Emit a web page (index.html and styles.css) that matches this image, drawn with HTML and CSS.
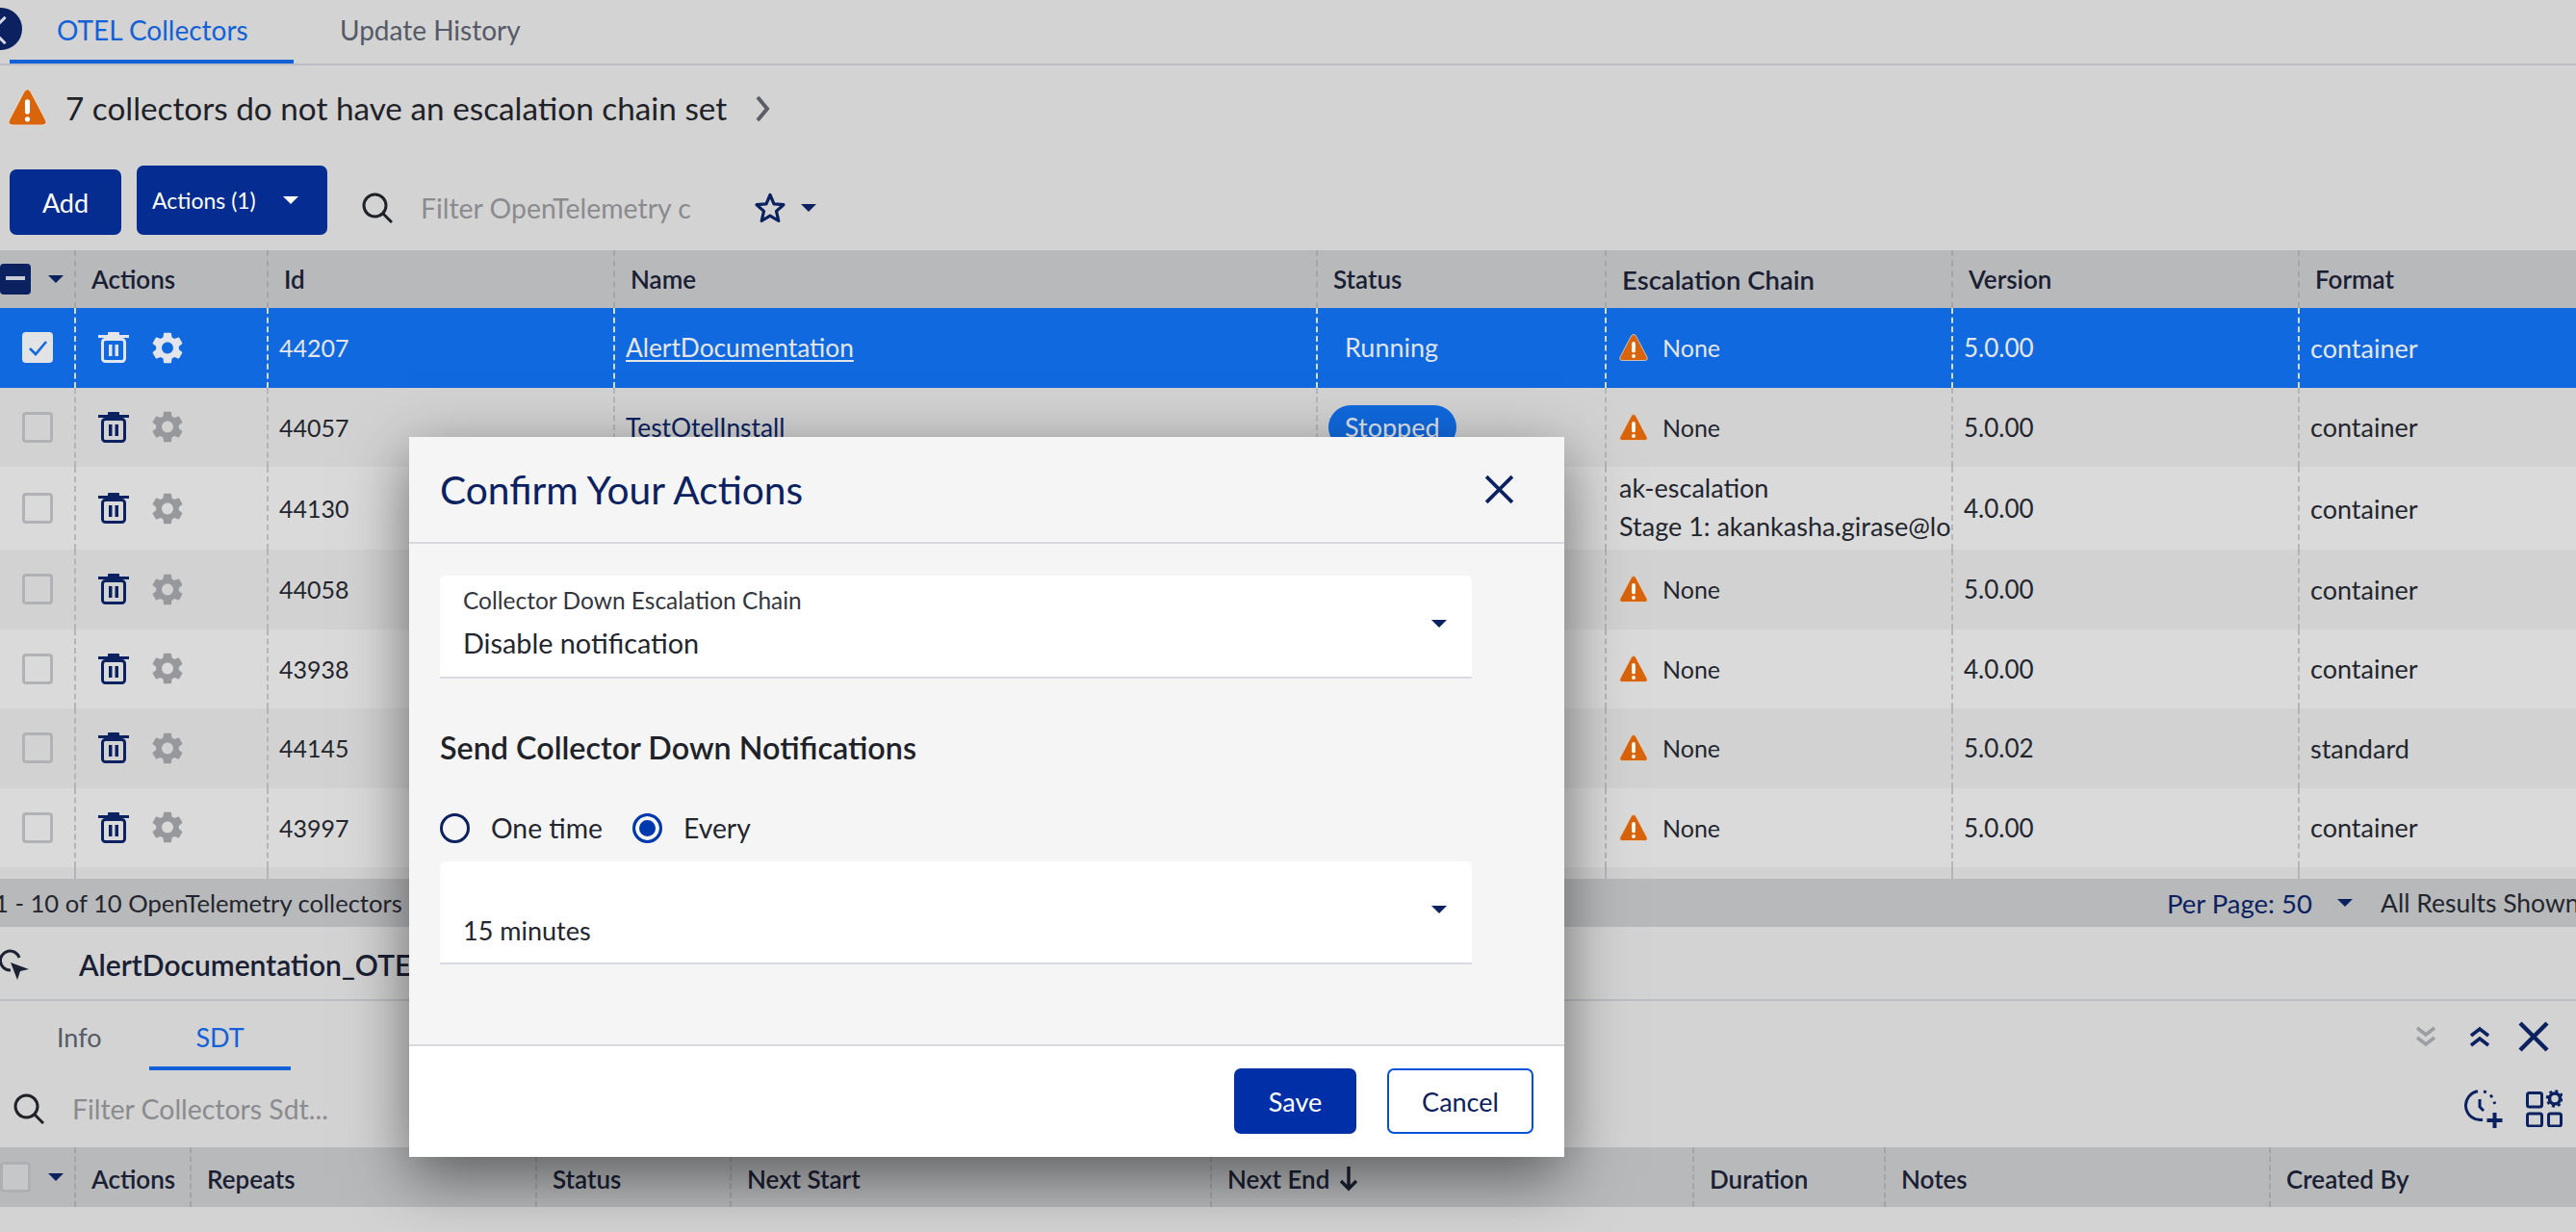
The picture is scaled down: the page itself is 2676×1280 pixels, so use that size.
FILE: index.html
```html
<!DOCTYPE html>
<html lang="en">
<head>
    <meta charset="UTF-8">
    <title>OTEL Collectors</title>
    <link rel="stylesheet" href="styles.css">
</head>
<body>
    <svg class="defs" width="0" height="0">
        <symbol id="warn" viewBox="0 0 40 40">
            <path d="M17 3.5 Q20 0 23 3.5 L38.5 33 Q40.5 38 35 38 H5 Q-0.5 38 1.5 33 Z" fill="#d9640a" stroke="#e6dcd2" stroke-width="1" stroke-linejoin="round"/>
            <rect x="17.5" y="12" width="5" height="15" rx="2.5" fill="#fff"/>
            <circle cx="20" cy="32" r="2.6" fill="#fff"/>
        </symbol>
        <symbol id="trash" viewBox="0 0 32 32">
            <rect x="0" y="3" width="32" height="3" fill="currentColor"/>
            <rect x="10" y="0" width="12" height="4" rx="1" fill="currentColor"/>
            <rect x="4.5" y="7.5" width="23" height="23" rx="3" fill="none" stroke="currentColor" stroke-width="3"/>
            <rect x="11" y="13" width="3.5" height="12" fill="currentColor"/>
            <rect x="17.5" y="13" width="3.5" height="12" fill="currentColor"/>
        </symbol>
        <symbol id="gear" viewBox="2.4 2 19.2 20">
            <path fill="currentColor" d="M19.14 12.94c.04-.3.06-.61.06-.94 0-.32-.02-.64-.07-.94l2.03-1.58c.18-.14.23-.41.12-.61l-1.92-3.32c-.12-.22-.37-.29-.59-.22l-2.39.96c-.5-.38-1.03-.7-1.62-.94l-.36-2.54c-.04-.24-.24-.41-.48-.41h-3.84c-.24 0-.43.17-.47.41l-.36 2.54c-.59.24-1.13.57-1.62.94l-2.39-.96c-.22-.08-.47 0-.59.22L2.74 8.87c-.12.21-.08.47.12.61l2.03 1.58c-.05.3-.09.63-.09.94s.02.64.07.94l-2.03 1.58c-.18.14-.23.41-.12.61l1.92 3.32c.12.22.37.29.59.22l2.39-.96c.5.38 1.03.7 1.62.94l.36 2.54c.05.24.24.41.48.41h3.84c.24 0 .44-.17.47-.41l.36-2.54c.59-.24 1.13-.56 1.62-.94l2.39.96c.22.08.47 0 .59-.22l1.92-3.32c.12-.22.07-.47-.12-.61l-2.01-1.58zM12 15.6c-1.98 0-3.6-1.62-3.6-3.6s1.62-3.6 3.6-3.6 3.6 1.62 3.6 3.6-1.62 3.6-3.6 3.6z"/>
        </symbol>
        <symbol id="search" viewBox="0 0 32 32">
            <circle cx="13.5" cy="13.5" r="11.5" fill="none" stroke="currentColor" stroke-width="3"/>
            <path d="M22 22 L31 31" stroke="currentColor" stroke-width="3" fill="none"/>
        </symbol>
    </svg>

    <div class="tabs">
        <span class="back-btn"></span>
        <div class="tab tab-active tab-otel">OTEL Collectors</div>
        <div class="tab tab-history">Update History</div>
    </div>

    <div class="notice">
        <svg class="icon-warn-lg"><use href="#warn"/></svg>
        <span class="notice-text">7 collectors do not have an escalation chain set</span>
        <svg class="notice-arrow" viewBox="0 0 18 28"><path d="M4 2 L14 14 L4 26" fill="none" stroke="#5b5e66" stroke-width="4"/></svg>
    </div>

    <div class="toolbar">
        <button class="btn-add">Add</button>
        <button class="btn-actions">Actions (1)<span class="caret caret-white"></span></button>
        <svg class="icon-search"><use href="#search"/></svg>
        <span class="placeholder filter-main">Filter OpenTelemetry c</span>
        <svg class="icon-star" viewBox="0 0 32 32"><path d="M16 2.5 L20 11.8 L30 12.7 L22.5 19.4 L24.8 29.5 L16 24.2 L7.2 29.5 L9.5 19.4 L2 12.7 L12 11.8 Z" fill="none" stroke="#0b2160" stroke-width="3.2" stroke-linejoin="round"/></svg>
        <span class="caret"></span>
    </div>

    <div class="table">
        <div class="row row-head">
            <div class="cell c-check"><span class="check check-minus"></span><span class="caret"></span></div>
            <div class="cell c-actions">Actions</div>
            <div class="cell c-id">Id</div>
            <div class="cell c-name">Name</div>
            <div class="cell c-status">Status</div>
            <div class="cell c-chain">Escalation Chain</div>
            <div class="cell c-version">Version</div>
            <div class="cell c-format">Format</div>
        </div>

        <div class="row row-selected">
            <div class="cell c-check"><span class="check check-on"><svg viewBox="0 0 24 24"><path d="M4 13 L10 19 L21 6" fill="none" stroke="#1069de" stroke-width="2.6"/></svg></span></div>
            <div class="cell c-actions"><svg class="icon-trash"><use href="#trash"/></svg><svg class="icon-gear"><use href="#gear"/></svg></div>
            <div class="cell c-id">44207</div>
            <div class="cell c-name"><a class="name-link">AlertDocumentation</a></div>
            <div class="cell c-status"><span class="pill">Running</span></div>
            <div class="cell c-chain"><svg class="icon-warn"><use href="#warn"/></svg>None</div>
            <div class="cell c-version">5.0.00</div>
            <div class="cell c-format">container</div>
        </div>
        <div class="row row-even">
            <div class="cell c-check"><span class="check"></span></div>
            <div class="cell c-actions"><svg class="icon-trash"><use href="#trash"/></svg><svg class="icon-gear"><use href="#gear"/></svg></div>
            <div class="cell c-id">44057</div>
            <div class="cell c-name"><a class="name-link">TestOtelInstall</a></div>
            <div class="cell c-status"><span class="pill">Stopped</span></div>
            <div class="cell c-chain"><svg class="icon-warn"><use href="#warn"/></svg>None</div>
            <div class="cell c-version">5.0.00</div>
            <div class="cell c-format">container</div>
        </div>
        <div class="row row-odd row-tall">
            <div class="cell c-check"><span class="check"></span></div>
            <div class="cell c-actions"><svg class="icon-trash"><use href="#trash"/></svg><svg class="icon-gear"><use href="#gear"/></svg></div>
            <div class="cell c-id">44130</div>
            <div class="cell c-name"></div>
            <div class="cell c-status"></div>
            <div class="cell c-chain c-chain-text"><div>ak-escalation</div><div>Stage 1: akankasha.girase@lo</div></div>
            <div class="cell c-version">4.0.00</div>
            <div class="cell c-format">container</div>
        </div>
        <div class="row row-even">
            <div class="cell c-check"><span class="check"></span></div>
            <div class="cell c-actions"><svg class="icon-trash"><use href="#trash"/></svg><svg class="icon-gear"><use href="#gear"/></svg></div>
            <div class="cell c-id">44058</div>
            <div class="cell c-name"></div>
            <div class="cell c-status"></div>
            <div class="cell c-chain"><svg class="icon-warn"><use href="#warn"/></svg>None</div>
            <div class="cell c-version">5.0.00</div>
            <div class="cell c-format">container</div>
        </div>
        <div class="row row-odd">
            <div class="cell c-check"><span class="check"></span></div>
            <div class="cell c-actions"><svg class="icon-trash"><use href="#trash"/></svg><svg class="icon-gear"><use href="#gear"/></svg></div>
            <div class="cell c-id">43938</div>
            <div class="cell c-name"></div>
            <div class="cell c-status"></div>
            <div class="cell c-chain"><svg class="icon-warn"><use href="#warn"/></svg>None</div>
            <div class="cell c-version">4.0.00</div>
            <div class="cell c-format">container</div>
        </div>
        <div class="row row-even">
            <div class="cell c-check"><span class="check"></span></div>
            <div class="cell c-actions"><svg class="icon-trash"><use href="#trash"/></svg><svg class="icon-gear"><use href="#gear"/></svg></div>
            <div class="cell c-id">44145</div>
            <div class="cell c-name"></div>
            <div class="cell c-status"></div>
            <div class="cell c-chain"><svg class="icon-warn"><use href="#warn"/></svg>None</div>
            <div class="cell c-version">5.0.02</div>
            <div class="cell c-format">standard</div>
        </div>
        <div class="row row-odd">
            <div class="cell c-check"><span class="check"></span></div>
            <div class="cell c-actions"><svg class="icon-trash"><use href="#trash"/></svg><svg class="icon-gear"><use href="#gear"/></svg></div>
            <div class="cell c-id">43997</div>
            <div class="cell c-name"></div>
            <div class="cell c-status"></div>
            <div class="cell c-chain"><svg class="icon-warn"><use href="#warn"/></svg>None</div>
            <div class="cell c-version">5.0.00</div>
            <div class="cell c-format">container</div>
        </div>
        <div class="row row-even row-cut">
            <div class="cell c-check"></div>
            <div class="cell c-actions"></div>
            <div class="cell c-id"></div>
            <div class="cell c-name"></div>
            <div class="cell c-status"></div>
            <div class="cell c-chain"></div>
            <div class="cell c-version"></div>
            <div class="cell c-format"></div>
        </div>
    </div>

    <div class="table-footer">
        <span class="results">1 - 10 of 10 OpenTelemetry collectors</span>
        <span class="per-page">Per Page: 50</span>
        <span class="caret"></span>
        <span class="all-results">All Results Shown</span>
    </div>

    <div class="detail-title">
        <svg class="icon-pointer" viewBox="0 0 30 32">
            <path d="M11 22 A10 10 0 1 1 20 9" fill="none" stroke="#1c2233" stroke-width="3"/>
            <path d="M11 14 L30 21 L21 23 L18 32 Z" fill="#1c2233"/>
        </svg>
        <span class="detail-name">AlertDocumentation_OTE</span>
    </div>

    <div class="detail-tabs">
        <div class="dtab dtab-info">Info</div>
        <div class="dtab dtab-active">SDT</div>
        <div class="detail-controls">
            <svg class="chev chev-muted" viewBox="0 0 20 22"><path d="M1 2 L10 9 L19 2 M1 12 L10 19 L19 12" fill="none" stroke="currentColor" stroke-width="3.5"/></svg>
            <svg class="chev" viewBox="0 0 20 22"><path d="M1 10 L10 3 L19 10 M1 20 L10 13 L19 20" fill="none" stroke="currentColor" stroke-width="3.5"/></svg>
            <svg class="close-lg" viewBox="0 0 32 32"><path d="M2 2 L30 30 M30 2 L2 30" fill="none" stroke="currentColor" stroke-width="4.5"/></svg>
        </div>
    </div>

    <div class="detail-filter">
        <svg class="icon-search icon-search-sm"><use href="#search"/></svg>
        <span class="placeholder">Filter Collectors Sdt...</span>
        <div class="filter-tools">
            <svg class="tool-clock" viewBox="0 0 40 40">
                <path d="M19 31.3 A15 15 0 0 1 14 1.7" fill="none" stroke="currentColor" stroke-width="3"/>
                <path d="M20 2 A15 15 0 0 1 31.5 15" fill="none" stroke="currentColor" stroke-width="3" stroke-dasharray="3 5"/>
                <path d="M16 10 V18 L20 22" fill="none" stroke="currentColor" stroke-width="3"/>
                <path d="M31.5 24 V40 M23.5 32 H39.5" fill="none" stroke="currentColor" stroke-width="4"/>
            </svg>
            <svg class="tool-grid" viewBox="0 0 38 39">
                <rect x="1.5" y="3.5" width="15" height="14.5" rx="2" fill="none" stroke="currentColor" stroke-width="3"/>
                <rect x="1.5" y="25" width="15" height="13" rx="2" fill="none" stroke="currentColor" stroke-width="3"/>
                <rect x="23.5" y="25" width="13" height="13" rx="2" fill="none" stroke="currentColor" stroke-width="3"/>
                <circle cx="30" cy="9.5" r="5.5" fill="none" stroke="currentColor" stroke-width="3.5"/>
                <circle cx="30" cy="9.5" r="8" fill="none" stroke="currentColor" stroke-width="2.5" stroke-dasharray="3 3.3"/>
            </svg>
        </div>
    </div>

    <div class="sub-table">
        <div class="sub-cell s-check"><span class="check check-gray"></span><span class="caret"></span></div>
        <div class="sub-cell s-actions">Actions</div>
        <div class="sub-cell s-repeats">Repeats</div>
        <div class="sub-cell s-status">Status</div>
        <div class="sub-cell s-start">Next Start</div>
        <div class="sub-cell s-end">Next End<svg class="sort-arrow" viewBox="0 0 20 26"><path d="M10 0 V23 M2 15 L10 23 L18 15" fill="none" stroke="currentColor" stroke-width="3.4"/></svg></div>
        <div class="sub-cell s-duration">Duration</div>
        <div class="sub-cell s-notes">Notes</div>
        <div class="sub-cell s-created">Created By</div>
    </div>

    <div class="modal">
        <div class="modal-header">
            <h2 class="modal-title">Confirm Your Actions</h2>
            <svg class="modal-close" viewBox="0 0 32 32"><path d="M3 3 L29 29 M29 3 L3 29" fill="none" stroke="#0b2160" stroke-width="3.6"/></svg>
        </div>
        <div class="modal-body">
            <div class="select">
                <div class="select-label">Collector Down Escalation Chain</div>
                <div class="select-value">Disable notification</div>
                <span class="caret select-caret"></span>
            </div>
            <h3 class="section-title">Send Collector Down Notifications</h3>
            <div class="radios">
                <span class="radio"></span><span class="radio-label">One time</span>
                <span class="radio radio-on"></span><span class="radio-label">Every</span>
            </div>
            <div class="select select-plain">
                <div class="select-value">15 minutes</div>
                <span class="caret select-caret"></span>
            </div>
        </div>
        <div class="modal-footer">
            <button class="btn-save">Save</button>
            <button class="btn-cancel">Cancel</button>
        </div>
    </div>
</body>
</html>
```

FILE: styles.css
```css
* {
    box-sizing: border-box;
}

html, body {
    margin: 0;
    height: 1280px;
    overflow: hidden;
}

body {
    position: relative;
    background: #d3d3d3;
    font-family: 'Lato', sans-serif;
    font-size: 26px;
    color: #23262e;
}

.defs {
    position: absolute;
}

.caret {
    display: inline-block;
    width: 0;
    height: 0;
    border-left: 8px solid transparent;
    border-right: 8px solid transparent;
    border-top: 8px solid #0b2160;
}

.caret-white {
    border-top-color: #fff;
    margin-left: 28px;
}

/* top tabs */
.tabs {
    height: 68px;
    border-bottom: 2px solid #bcbcc4;
    display: flex;
    position: relative;
}

.back-btn {
    position: absolute;
    left: -21px;
    top: 8px;
    width: 44px;
    height: 44px;
    border-radius: 50%;
    background: #0b2160;
}

.back-btn::after {
    content: "";
    position: absolute;
    left: 15px;
    top: 13px;
    width: 18px;
    height: 18px;
    border-left: 3px solid #d8dbe4;
    border-bottom: 3px solid #d8dbe4;
    transform: rotate(45deg);
}

.tab {
    font-size: 28px;
    line-height: 62px;
    height: 66px;
    color: #555a66;
}

.tab-otel {
    margin-left: 10px;
    width: 295px;
    padding-left: 49px;
}

.tab-history {
    margin-left: 48px;
}

.tab-active {
    color: #1261d8;
    border-bottom: 4px solid #1261d8;
}

/* notice */
.notice {
    height: 92px;
    display: flex;
    align-items: center;
    padding-left: 8px;
}

.icon-warn-lg {
    width: 41px;
    height: 41px;
    margin-top: -6px;
}

.notice-text {
    margin-left: 19px;
    font-size: 33.3px;
    margin-top: -4px;
    color: #1f2228;
}

.notice-arrow {
    width: 18px;
    height: 28px;
    margin-left: 28px;
    margin-top: -2px;
}

/* toolbar */
.toolbar {
    height: 100px;
    display: flex;
    align-items: center;
    padding-left: 10px;
}

.toolbar button {
    border: none;
    color: #fff;
    background: #052c91;
    border-radius: 7px;
    font-family: inherit;
}

.btn-add {
    width: 116px;
    height: 68px;
    font-size: 27px;
}

.btn-actions {
    width: 198px;
    height: 72px;
    margin-left: 16px;
    margin-bottom: 4px;
    font-size: 23px;
    display: flex;
    align-items: center;
    padding: 0 0 0 16px;
}

.icon-search {
    width: 32px;
    height: 32px;
    color: #1f2228;
    margin-left: 36px;
    margin-top: 12px;
}

.placeholder {
    color: #8a8b8e;
    font-size: 28.4px;
}

.filter-main {
    width: 283px;
    margin-left: 29px;
    margin-top: 12px;
    overflow: hidden;
    white-space: nowrap;
}

.icon-star {
    width: 32px;
    height: 32px;
    margin-left: 64px;
    margin-top: 12px;
}

.toolbar > .caret {
    margin-left: 16px;
    margin-top: 12px;
}

/* main table */
.row {
    display: flex;
    height: 82.5px;
}

.row-head {
    height: 60px;
    background: #b8b9bb;
    font-weight: 600;
    color: #1a2033;
}

.row-selected {
    background: #1069de;
    color: #e4e6ea;
}

.row-even {
    background: #d2d2d2;
}

.row-odd {
    background: #dadada;
}

.row-tall {
    height: 86px;
}

.row-cut {
    height: 12px;
}

.cell {
    display: flex;
    align-items: center;
    flex: none;
    border-left: 2px dashed #b4b5b8;
    padding-left: 11px;
    font-size: 25px;
    white-space: nowrap;
    overflow: hidden;
}

.row-head .cell {
    padding-left: 16px;
    border-left-color: #a4a5a8;
    font-size: 26px;
}

.row-selected .cell {
    border-left-color: #d6dbe6;
}

.c-check {
    width: 77px;
    border-left: none;
    padding-left: 23px;
}

.row-head .c-check {
    padding-left: 0;
    justify-content: flex-start;
}

.row-head .c-check .caret {
    margin-left: 18px;
}

.c-actions { width: 200px; padding-left: 23px; }
.c-id { width: 360px; }
.c-name { width: 730px; font-size: 26.3px; }
.c-status { width: 300px; }
.c-chain { width: 360px; padding-left: 13px; }
.c-version { width: 360px; font-size: 26px; }
.c-format { width: 289px; font-size: 27px; }

.row-head .c-actions { padding-left: 16px; }
.row-head .c-chain { padding-left: 16px; font-size: 27.5px; }

.c-chain-text {
    display: block;
    padding-top: 2px;
    line-height: 40px;
    font-size: 27px;
}

.check {
    display: inline-block;
    width: 32px;
    height: 32px;
    border: 3px solid #b1b2b5;
    border-radius: 4px;
    flex: none;
}

.check-minus {
    background: #0b2160;
    border-color: #0b2160;
    position: relative;
}

.check-minus::after {
    content: "";
    position: absolute;
    left: 3px;
    right: 3px;
    top: 10px;
    height: 4px;
    background: #c9ccd6;
}

.check-on {
    background: #e2e3e5;
    border: none;
    padding: 4px;
}

.check-on svg {
    display: block;
}

.check-gray {
    background: #c6c7c9;
    border-color: #aeafb2;
}

.icon-trash {
    width: 32px;
    height: 32px;
    color: #0b2160;
}

.icon-gear {
    width: 32px;
    height: 33px;
    margin-left: 24px;
    color: #97989c;
}

.row-selected .icon-trash,
.row-selected .icon-gear {
    color: #e2e5ec;
}

.name-link {
    text-decoration: underline;
    text-underline-offset: 3px;
}

.row-even .name-link {
    text-decoration: none;
    color: #0b2160;
}

.pill {
    background: #1069de;
    color: #dfe4ee;
    border-radius: 23px;
    height: 46px;
    line-height: 46px;
    padding: 0 17px;
    font-size: 27px;
}

.icon-warn {
    width: 30px;
    height: 30px;
    margin-right: 15px;
    margin-left: 0;
}

/* footer of main table */
.table-footer {
    height: 50px;
    background: #b8b9bb;
    display: flex;
    align-items: center;
    font-size: 25.6px;
    white-space: nowrap;
}

.results {
    margin-left: -6px;
    flex: none;
    width: 2257px;
}

.per-page {
    color: #0b2160;
    width: 177px;
    flex: none;
    font-size: 27.5px;
}

.all-results {
    margin-left: 29px;
    flex: none;
    font-size: 26.5px;
}

/* detail pane */
.detail-title {
    height: 77px;
    border-bottom: 2px solid #bcbcc4;
    display: flex;
    align-items: center;
    padding-top: 3px;
}

.icon-pointer {
    width: 30px;
    height: 32px;
    flex: none;
}

.detail-name {
    margin-left: 52px;
    font-size: 30px;
    font-weight: 600;
    color: #1a2033;
}

.detail-tabs {
    height: 72px;
    display: flex;
    position: relative;
}

.dtab {
    font-size: 27px;
    text-align: center;
    line-height: 76px;
    height: 72px;
    color: #555a66;
}

.dtab-info {
    width: 155px;
    padding-left: 59px;
    text-align: left;
}

.dtab-active {
    width: 147px;
    color: #1261d8;
    border-bottom: 4px solid #1261d8;
}

.detail-controls {
    margin-left: auto;
    margin-right: 28px;
    display: flex;
    align-items: center;
    gap: 30px;
    padding-top: 2px;
    color: #0b2160;
}

.chev {
    width: 20px;
    height: 22px;
}

.chev-muted {
    color: #9d9ea3;
    margin-right: 6px;
}

.close-lg {
    width: 32px;
    height: 32px;
}

.detail-filter {
    height: 80px;
    display: flex;
    align-items: center;
    padding-left: 14px;
}

.icon-search-sm {
    margin: 0;
}

.detail-filter .placeholder {
    margin-left: 29px;
}

.filter-tools {
    margin-left: auto;
    margin-right: 14px;
    display: flex;
    gap: 24px;
    color: #0b2160;
}

.tool-clock {
    width: 40px;
    height: 40px;
}

.tool-grid {
    width: 38px;
    height: 39px;
}

.sub-table {
    height: 62px;
    background: #b8b9bb;
    display: flex;
    font-weight: 600;
    font-size: 26px;
    color: #1a2033;
}

.sub-cell {
    display: flex;
    align-items: center;
    flex: none;
    border-left: 2px dashed #a4a5a8;
    padding: 4px 0 0 16px;
}

.s-check { width: 77px; border-left: none; padding: 0; }
.s-check .caret { margin-left: 18px; }
.s-actions { width: 120px; }
.s-repeats { width: 359px; }
.s-status { width: 202px; }
.s-start { width: 499px; }
.s-end { width: 501px; }
.s-duration { width: 199px; }
.s-notes { width: 400px; }
.s-created { width: 319px; }

.sort-arrow {
    width: 20px;
    height: 26px;
    margin-left: 10px;
}

/* modal */
.modal {
    position: absolute;
    left: 425px;
    top: 454px;
    width: 1200px;
    height: 748px;
    display: flex;
    flex-direction: column;
    background: #f5f5f5;
    box-shadow: 0 20px 60px rgba(0, 0, 0, 0.5);
}

.modal-header {
    height: 111px;
    flex: none;
    border-bottom: 2px solid #d9d9df;
    display: flex;
    align-items: center;
    justify-content: space-between;
    padding: 0 51px 0 32px;
}

.modal-title {
    margin: 0;
    font-size: 40.7px;
    font-weight: 400;
    color: #0b2160;
}

.modal-close {
    width: 33px;
    height: 33px;
}

.modal-body {
    flex: 1;
    padding: 33px 0 0 32px;
}

.select {
    position: relative;
    width: 1072px;
    height: 107px;
    background: #fff;
    border-bottom: 2px solid #d9d9e2;
    border-radius: 6px 6px 0 0;
    padding: 11px 24px 0;
}

.select-label {
    font-size: 24.5px;
    line-height: 30px;
    color: #33363e;
}

.select-value {
    font-size: 28.8px;
    line-height: 34px;
    margin-top: 12px;
    color: #23262e;
}

.select-plain {
    padding-top: 55px;
}

.select-plain .select-value {
    margin-top: 0;
    font-size: 27px;
}

.select-caret {
    position: absolute;
    right: 26px;
    top: 46px;
}

.section-title {
    margin: 52px 0 0;
    font-size: 32.3px;
    line-height: 40px;
    font-weight: 600;
    color: #1f2228;
}

.radios {
    display: flex;
    align-items: center;
    margin: 46px 0 18px;
    height: 34px;
}

.radio {
    width: 31px;
    height: 31px;
    border: 3px solid #0b2160;
    border-radius: 50%;
    flex: none;
}

.radio-on {
    border-color: #0038ad;
    background: #0038ad;
    box-shadow: inset 0 0 0 4px #f5f5f5;
}

.radio-label {
    margin: 0 31px 0 22px;
    font-size: 28.3px;
}

.modal-footer {
    height: 117px;
    flex: none;
    background: #fff;
    border-top: 2px solid #d9d9df;
    display: flex;
    justify-content: flex-end;
    padding: 23px 32px 0 0;
    gap: 32px;
}

.modal-footer button {
    height: 68px;
    border-radius: 7px;
    font-family: inherit;
    font-size: 27px;
}

.btn-save {
    width: 127px;
    border: none;
    background: #002fa7;
    color: #fff;
}

.btn-cancel {
    width: 152px;
    border: 2px solid #0052d9;
    background: #fff;
    color: #0b2160;
}
```
